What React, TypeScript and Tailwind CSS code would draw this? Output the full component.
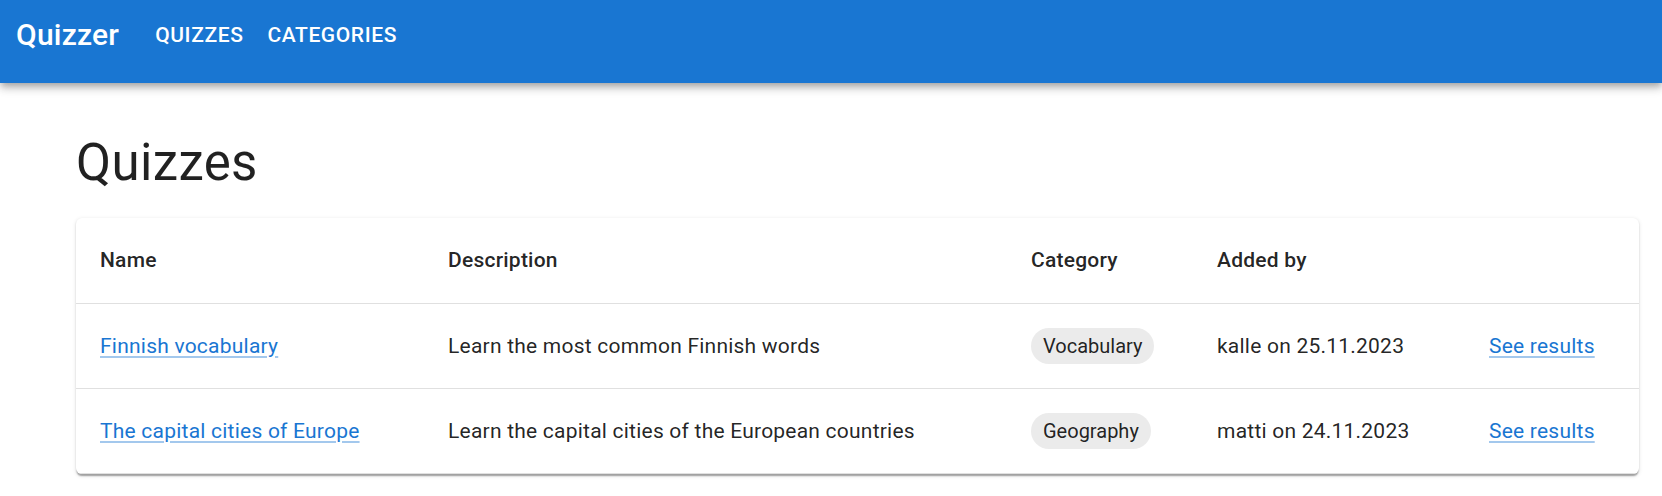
import React from "react";

const rows = [
  {
    name: "Finnish vocabulary",
    description: "Learn the most common Finnish words",
    category: "Vocabulary",
    added: "kalle on 25.11.2023",
  },
  {
    name: "The capital cities of Europe",
    description: "Learn the capital cities of the European countries",
    category: "Geography",
    added: "matti on 24.11.2023",
  },
];

const linkCls =
  "text-[#1976d2] underline decoration-[rgba(25,118,210,0.4)] underline-offset-[3px] cursor-pointer";

export default function App() {
  return (
    <div
      className="min-h-[496px] bg-white text-[rgba(0,0,0,0.87)]"
      style={{ fontFamily: 'Roboto, "Helvetica Neue", Arial, sans-serif' }}
    >
      <header className="relative z-10 h-[83px] bg-[#1976d2] text-white shadow-[0_3px_6px_-1.5px_rgba(0,0,0,0.2),0_6px_7.5px_0_rgba(0,0,0,0.14),0_1.5px_15px_0_rgba(0,0,0,0.12)]">
        <div className="flex h-[70px] items-center pl-[16px]">
          <div className="text-[30px] font-medium leading-[48px] tracking-[0.0075em]">
            Quizzer
          </div>
          <nav className="ml-[24px] flex">
            <button className="px-[12px] py-[9px] text-[21px] font-medium uppercase leading-[36px] tracking-[0.02857em]">
              Quizzes
            </button>
            <button className="px-[12px] py-[9px] text-[21px] font-medium uppercase leading-[36px] tracking-[0.02857em]">
              Categories
            </button>
          </nav>
        </div>
      </header>

      <main className="ml-[76px] mr-[23px] pt-[48px]">
        <h1 className="text-[51px] font-normal leading-[63px] tracking-[0.00735em]">
          Quizzes
        </h1>
        <div className="mt-[24px] overflow-hidden rounded-[6px] bg-white shadow-[0_3px_1.5px_-1.5px_rgba(0,0,0,0.2),0_1.5px_1.5px_0_rgba(0,0,0,0.14),0_1.5px_4.5px_0_rgba(0,0,0,0.12)]">
          <table className="w-full table-fixed border-collapse text-left">
            <colgroup>
              <col className="w-[348px]" />
              <col className="w-[583px]" />
              <col className="w-[186px]" />
              <col className="w-[272px]" />
              <col className="w-[174px]" />
            </colgroup>
            <thead>
              <tr>
                {["Name", "Description", "Category", "Added by", ""].map((h, i) => (
                  <th
                    key={i}
                    className="h-[85px] border-b border-[#e0e0e0] px-[24px] py-0 text-[21px] font-medium leading-[36px] tracking-[0.01071em]"
                  >
                    {h}
                  </th>
                ))}
              </tr>
            </thead>
            <tbody>
              {rows.map((r, i) => (
                <tr key={i}>
                  <td className="h-[85px] border-b border-[#e0e0e0] px-[24px] py-0 text-[21px] leading-[36px] tracking-[0.01071em] whitespace-nowrap">
                    <a className={linkCls}>{r.name}</a>
                  </td>
                  <td className="h-[85px] border-b border-[#e0e0e0] px-[24px] py-0 text-[21px] leading-[36px] tracking-[0.01071em] whitespace-nowrap">
                    {r.description}
                  </td>
                  <td className="h-[85px] border-b border-[#e0e0e0] px-[24px] py-0">
                    <div className="flex">
                      <span className="flex h-[36px] items-center rounded-full bg-[#ebebeb] px-[12px] text-[20px] leading-[36px]">
                        {r.category}
                      </span>
                    </div>
                  </td>
                  <td className="h-[85px] border-b border-[#e0e0e0] px-[24px] py-0 text-[21px] leading-[36px] tracking-[0.01071em] whitespace-nowrap">
                    {r.added}
                  </td>
                  <td className="h-[85px] border-b border-[#e0e0e0] px-[24px] py-0 text-[21px] leading-[36px] tracking-[0.01071em] whitespace-nowrap">
                    <a className={linkCls}>See results</a>
                  </td>
                </tr>
              ))}
            </tbody>
          </table>
        </div>
      </main>
    </div>
  );
}
